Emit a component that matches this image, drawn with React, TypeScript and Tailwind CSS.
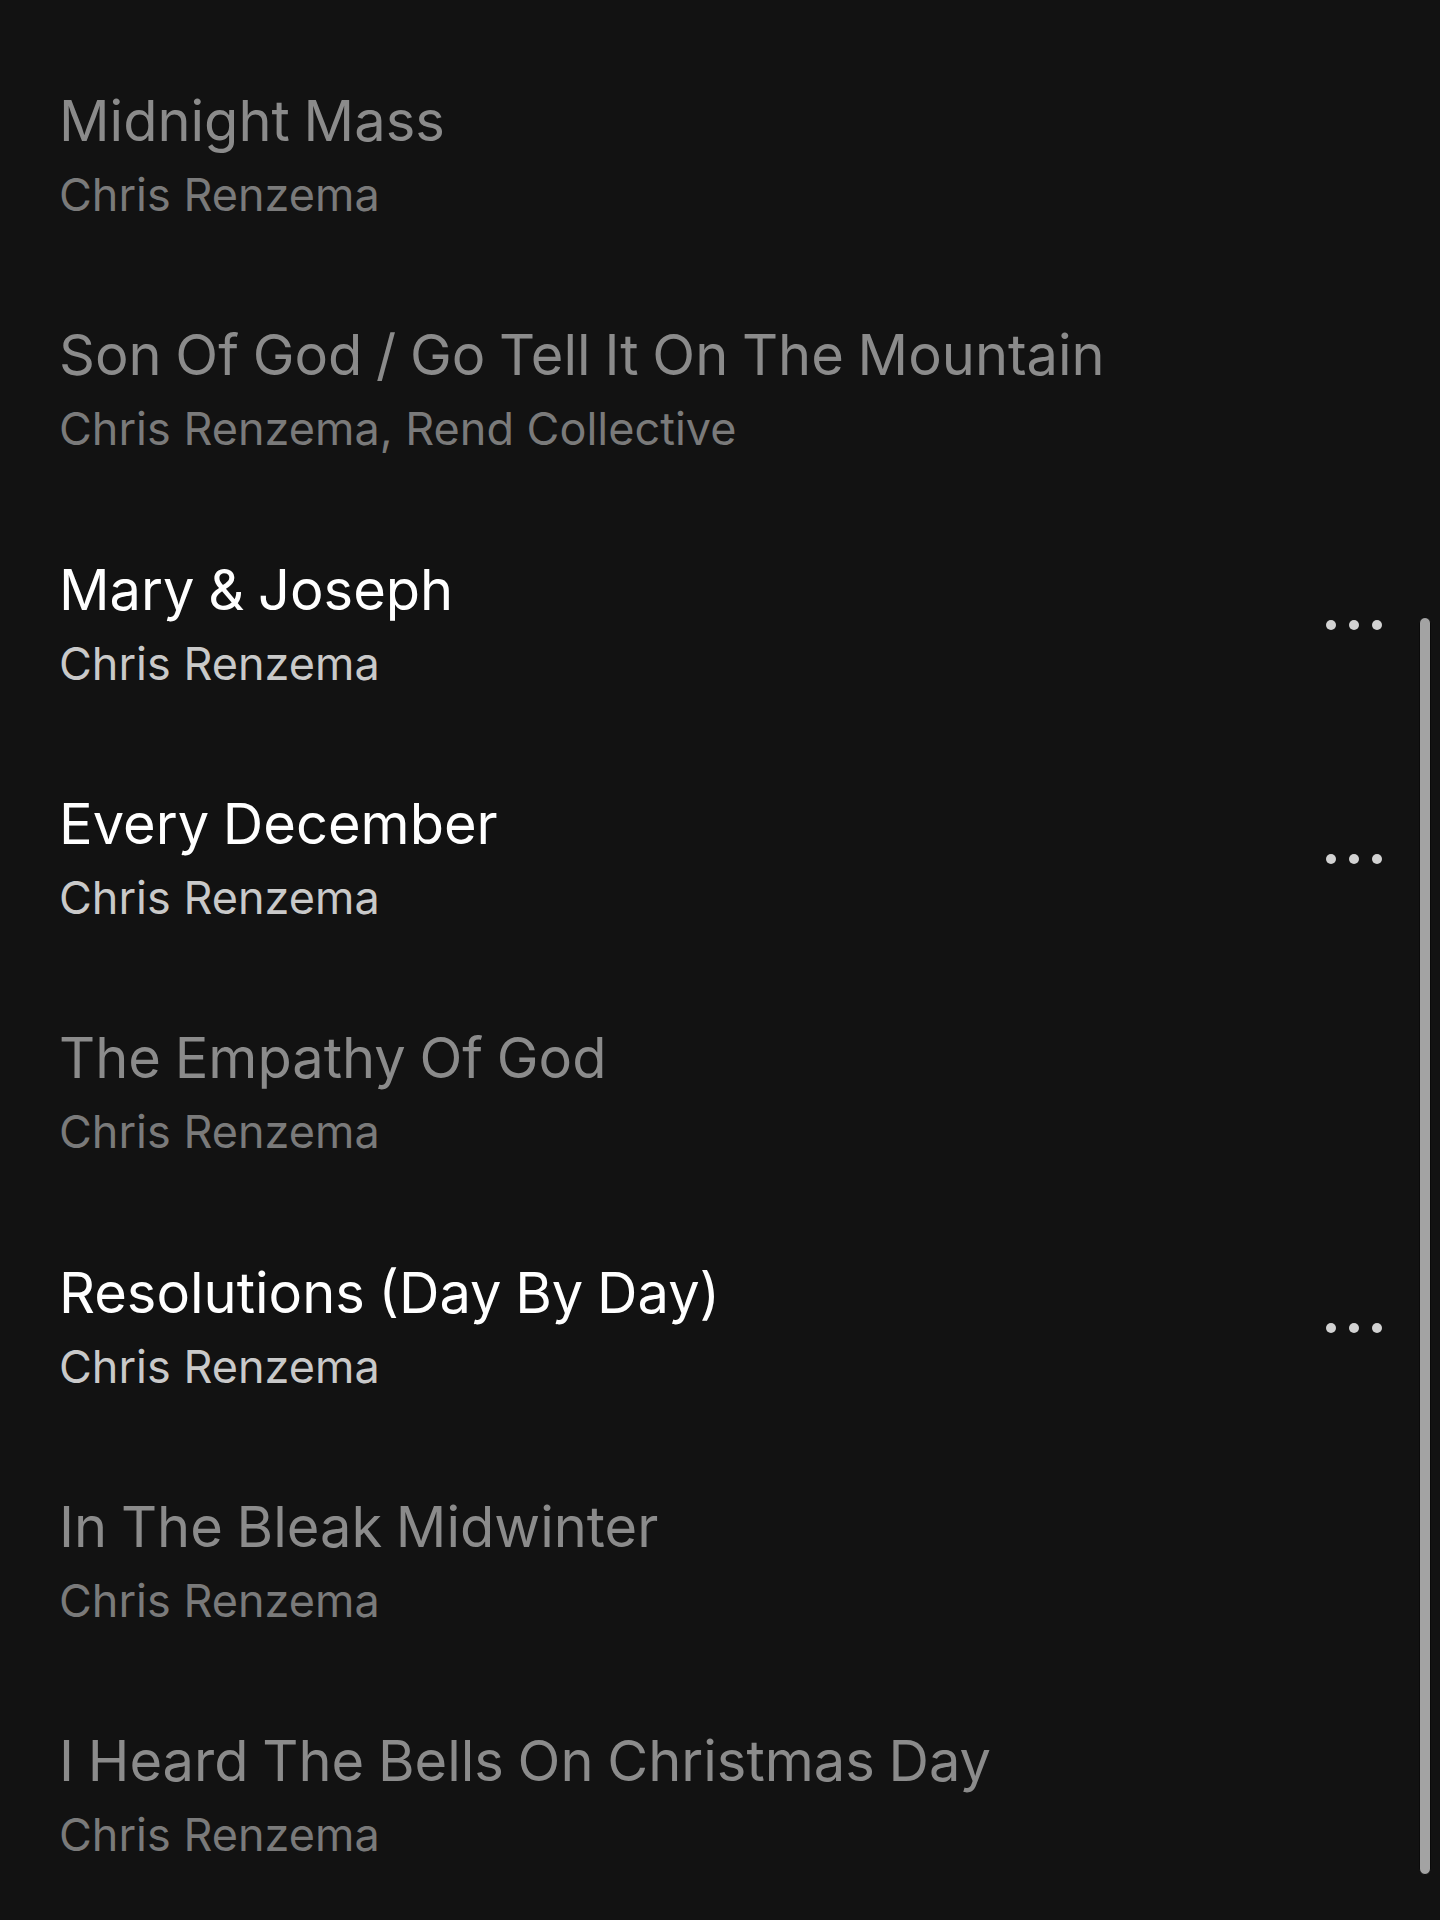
import React from "react";

interface Track {
  title: string;
  artist: string;
  available: boolean;
}

const tracks: Track[] = [
  { title: "Midnight Mass", artist: "Chris Renzema", available: false },
  { title: "Son Of God / Go Tell It On The Mountain", artist: "Chris Renzema, Rend Collective", available: false },
  { title: "Mary & Joseph", artist: "Chris Renzema", available: true },
  { title: "Every December", artist: "Chris Renzema", available: true },
  { title: "The Empathy Of God", artist: "Chris Renzema", available: false },
  { title: "Resolutions (Day By Day)", artist: "Chris Renzema", available: true },
  { title: "In The Bleak Midwinter", artist: "Chris Renzema", available: false },
  { title: "I Heard The Bells On Christmas Day", artist: "Chris Renzema", available: false },
];

function MoreButton() {
  return (
    <button className="flex items-center gap-[13px] py-4" aria-label="More options">
      <span className="block h-[10px] w-[10px] rounded-full bg-[#d2d2d2]" />
      <span className="block h-[10px] w-[10px] rounded-full bg-[#d2d2d2]" />
      <span className="block h-[10px] w-[10px] rounded-full bg-[#d2d2d2]" />
    </button>
  );
}

function TrackRow({ track }: { track: Track }) {
  return (
    <li className="flex h-[234.3px] items-center justify-between pl-[59px] pr-[58px]">
      <div className="flex flex-col">
        <span
          className={`text-[56px] leading-[64px] font-normal [word-spacing:-2px] ${
            track.available ? "text-white" : "text-[#8b8b8b]"
          }`}
        >
          {track.title}
        </span>
        <span
          className={`mt-[14px] text-[45px] leading-[56px] font-normal ${
            track.available ? "text-[#c9c9c9]" : "text-[#7a7a7a]"
          }`}
        >
          {track.artist}
        </span>
      </div>
      {track.available && <MoreButton />}
    </li>
  );
}

export default function App() {
  return (
    <div
      className="relative h-[1920px] w-full overflow-hidden bg-[#121212]"
      style={{ fontFamily: "Inter, 'Noto Sans', sans-serif" }}
    >
      <ul className="flex flex-col pt-[39px]">
        {tracks.map((t) => (
          <TrackRow key={t.title} track={t} />
        ))}
      </ul>

      {/* scroll thumb */}
      <div className="absolute right-[9px] top-[617px] h-[1258px] w-[12px] rounded-full border border-[#0a0a0a] bg-[#a3a3a3]" />
    </div>
  );
}
